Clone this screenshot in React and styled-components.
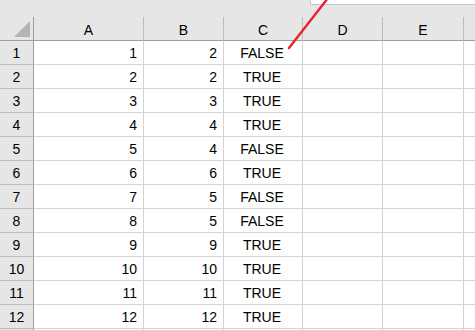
import React from "react";
import styled, { createGlobalStyle } from "styled-components";

const GlobalStyle = createGlobalStyle`
  html, body {
    margin: 0;
    padding: 0;
    background: #ffffff;
    overflow: hidden;
  }
`;

const Sheet = styled.div`
  position: relative;
  width: 475px;
  height: 330px;
  overflow: hidden;
  font-family: "Liberation Sans", Arial, sans-serif;
  font-size: 14px;
  color: #000;
`;

const TopStrip = styled.div`
  height: 17px;
  background: #e6e6e6;
  display: flex;
  justify-content: flex-end;
`;

const NameBox = styled.div`
  width: 164px;
  height: 4px;
  background: #ffffff;
  border-left: 1px solid #c6c6c6;
  border-bottom: 1px solid #c6c6c6;
`;

const Grid = styled.div`
  display: grid;
  grid-template-columns: 34px 110px 80px 79px 80px 81px 40px;
  grid-auto-rows: 24px;
`;

const Corner = styled.div`
  background: #e6e6e6;
  border-right: 1px solid #9f9f9f;
  border-bottom: 1px solid #9f9f9f;
  display: flex;
  align-items: flex-end;
  justify-content: flex-end;
  padding: 0 3px 3px 0;
  box-sizing: border-box;
`;

const Triangle = styled.div`
  width: 0;
  height: 0;
  border-left: 16px solid transparent;
  border-bottom: 16px solid #b4b4b4;
`;

const ColHead = styled.div`
  background: #e6e6e6;
  border-right: 1px solid ${(p) => (p.$last ? "#e6e6e6" : "#bcbcbc")};
  border-bottom: 1px solid #9f9f9f;
  display: flex;
  align-items: center;
  justify-content: center;
  box-sizing: border-box;
  padding-top: 3px;
`;

const RowHead = styled.div`
  background: #e6e6e6;
  border-right: 1px solid #9f9f9f;
  border-bottom: 1px solid #bcbcbc;
  display: flex;
  align-items: center;
  justify-content: center;
  box-sizing: border-box;
  padding-top: 1px;
`;

const Cell = styled.div`
  border-right: 1px solid #d4d4d4;
  border-bottom: 1px solid #d4d4d4;
  display: flex;
  align-items: center;
  justify-content: ${(p) =>
    p.$align === "center" ? "center" : p.$align === "right" ? "flex-end" : "flex-start"};
  padding: 1px 6px 0 4px;
  box-sizing: border-box;
  white-space: nowrap;
`;

const Arrow = styled.svg`
  position: absolute;
  left: 0;
  top: 0;
  pointer-events: none;
`;

const rows = [
  [1, 2, "FALSE"],
  [2, 2, "TRUE"],
  [3, 3, "TRUE"],
  [4, 4, "TRUE"],
  [5, 4, "FALSE"],
  [6, 6, "TRUE"],
  [7, 5, "FALSE"],
  [8, 5, "FALSE"],
  [9, 9, "TRUE"],
  [10, 10, "TRUE"],
  [11, 11, "TRUE"],
  [12, 12, "TRUE"],
  [null, "", "", ""],
];

const App = () => {
  return (
    <>
      <GlobalStyle />
      <Sheet>
        <TopStrip>
          <NameBox />
        </TopStrip>
        <Grid>
          <Corner>
            <Triangle />
          </Corner>
          {["A", "B", "C", "D", "E", ""].map((c, i) => (
            <ColHead key={i} $last={i === 5}>{c}</ColHead>
          ))}
          {rows.map((r, i) => (
            <React.Fragment key={i}>
              <RowHead>{i < 12 ? i + 1 : ""}</RowHead>
              <Cell $align="right">{i < 12 ? r[0] : ""}</Cell>
              <Cell $align="right">{i < 12 ? r[1] : ""}</Cell>
              <Cell $align="center">{i < 12 ? r[2] : ""}</Cell>
              <Cell />
              <Cell />
              <Cell />
            </React.Fragment>
          ))}
        </Grid>
        <Arrow width="475" height="330">
          <line x1="289" y1="48" x2="328" y2="-2" stroke="#e8232c" strokeWidth="2.4" strokeLinecap="round" />
        </Arrow>
      </Sheet>
    </>
  );
};

export default App;
